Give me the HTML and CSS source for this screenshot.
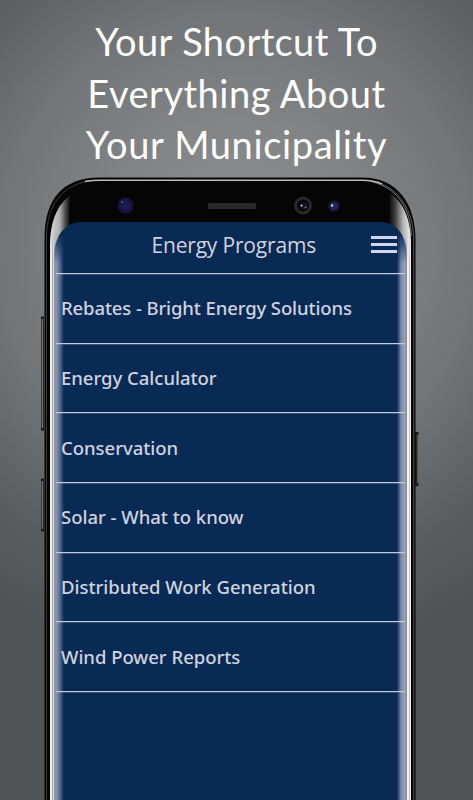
FILE: index.html
```
<!DOCTYPE html>
<html lang="en">

<head>
    <meta charset="UTF-8" />
    <meta name="viewport" content="width=device-width, initial-scale=1.0" />
    <title>Energy Programs</title>
    <link rel="stylesheet" href="styles.css">
</head>

<body>
    <h1 class="headline">
        <span class="line line-1">Your Shortcut To</span>
        <span class="line line-2">Everything About</span>
        <span class="line line-3">Your Municipality</span>
    </h1>
    <div class="phone">
        <!-- phone body -->
        <svg class="phone-art" width="385" height="630" viewBox="38 170 385 630">
            <defs>
                <linearGradient id="silver-l" x1="50" x2="74" y1="0" y2="0" gradientUnits="userSpaceOnUse">
                    <stop offset="0" stop-color="#dcdcdc" />
                    <stop offset="0.4" stop-color="#adadad" />
                    <stop offset="0.62" stop-color="#555" />
                    <stop offset="0.85" stop-color="#050505" />
                </linearGradient>
                <linearGradient id="silver-r" x1="411" x2="389" y1="0" y2="0" gradientUnits="userSpaceOnUse">
                    <stop offset="0" stop-color="#f0f0f0" />
                    <stop offset="0.35" stop-color="#b5b5b5" />
                    <stop offset="0.7" stop-color="#444" />
                    <stop offset="1" stop-color="#050505" />
                </linearGradient>
            </defs>
            <!-- side buttons -->
            <path d="M44 317H41.5V430H44M44 479H41.5V531H44" fill="#222" stroke="#111" />
            <path d="M42.2 319V428M42.2 481V529" stroke="#98999a" />
            <path d="M415 432.500H418V485.500H415" fill="#222" stroke="#111" />
            <path d="M418 435V483" stroke="#8d8e8f" />
            <path d="M44.500 810V238C44.500 200 62 177.500 100 177.500H362C397 177.500 415.500 203 415.500 240V810Z" fill="#050505" />
            <path d="M46.500 810V238C46.500 202 65 180.500 100 180.300" fill="none" stroke="#484848" stroke-width="0.8" />
            <path d="M85 181.500Q92 180.300 100 180.300H362Q374 180.300 382 184" fill="none" stroke="#bdbdbd" stroke-width="1.4" />
            <path d="M382 184C403 193 413.700 215 413.700 240V810" fill="none" stroke="#555" stroke-width="1" />
            <path d="M372 182C396 187 411 208 411.200 236" fill="none" stroke="#999" stroke-width="0.8" />
            <path d="M50 810V246C50 220 58 202 74 193V236L62 260V810Z" fill="url(#silver-l)" />
            <path d="M411 810V244C411 220 404 201 387 191V230L400 260V810Z" fill="url(#silver-r)" />
            <path d="M54.500 810V251C56 235 65 222 82 222H380C396 222 405 234 406.500 251V810Z" fill="#0a2a56" />
            <circle cx="125.500" cy="205.500" r="8" fill="#15153c" />
            <circle cx="125.500" cy="205" r="5" fill="#1b1b50" />
            <circle cx="122" cy="202" r="1" fill="#56568a" />
            <rect x="208" y="203" width="48" height="6" rx="1" fill="#292929" />
            <circle cx="303" cy="205.500" r="7.500" fill="#080808" stroke="#292929" stroke-width="3" />
            <circle cx="304" cy="206" r="3.500" fill="#141829" />
            <circle cx="301.500" cy="205.500" r="1" fill="#ddd" />
            <circle cx="305.500" cy="207.500" r="0.800" fill="#999" />
            <circle cx="334" cy="206" r="6" fill="#111330" />
            <circle cx="334" cy="206" r="4" fill="#20285a" />
            <circle cx="332" cy="205.500" r="1.200" fill="#ccd" />
        </svg>
        <div class="edge edge-left"></div>
        <div class="edge edge-right"></div>
        <div class="screen">
            <div class="topbar">
                <div class="title">Energy Programs</div>
                <div class="menu"><i></i><i></i><i></i></div>
            </div>
            <ul class="list">
                <li class="long">Rebates - Bright Energy Solutions</li>
                <li>Energy Calculator</li>
                <li>Conservation</li>
                <li>Solar - What to know</li>
                <li>Distributed Work Generation</li>
                <li>Wind Power Reports</li>
            </ul>
        </div>
    </div>
</body>

</html>
```
FILE: styles.css
```
* {
    box-sizing: border-box;
}

body {
    margin: 0;
    width: 473px;
    height: 800px;
    overflow: hidden;
    background: radial-gradient(ellipse 400px 400px at 236px 250px, #8e8f91 0%, #838587 30%, #727577 60%, #5b5e61 85%, #505457 105%);
    font-family: "Noto Sans", "Open Sans", sans-serif;
}

.headline {
    margin: 0;
    height: 170px;
    padding-top: 16px;
    display: flex;
    flex-direction: column;
    align-items: center;
    color: #fff;
    font: 400 38px/51.5px Lato, sans-serif;
}

.line {
    white-space: nowrap;
}

.line-1 {
    letter-spacing: 0.4px;
}

.line-2 {
    letter-spacing: 0.5px;
}

.line-3 {
    letter-spacing: 0.65px;
}

.phone {
    position: relative;
    width: 385px;
    height: 630px;
    margin-left: 38px;
    padding: 52px 18px 0;
}

.phone-art {
    position: absolute;
    left: 0;
    top: 0;
}

.screen {
    position: relative;
    color: #d0d3de;
}

.topbar {
    height: 52px;
    display: flex;
    align-items: center;
    justify-content: flex-end;
    padding: 0 8px 6px 0;
    border-bottom: 1px solid #c6c9dc;
    box-shadow: 0 1px rgba(190, 195, 220, 0.25);
}

.title {
    font: 400 21px/30px "Open Sans", sans-serif;
    letter-spacing: -0.18px;
    margin-right: 55px;
    white-space: nowrap;
}

.menu {
    display: flex;
    flex-direction: column;
    gap: 4px;
}

.menu i {
    width: 26px;
    height: 3px;
    background: #d2d6ea;
}

.list {
    margin: 0;
    padding: 0;
    list-style: none;
}

.list li {
    height: 69.650px;
    display: flex;
    align-items: center;
    padding: 0 0 1px 5px;
    border-bottom: 1px solid #c6c9dc;
    box-shadow: 0 1px rgba(190, 195, 220, 0.25);
    font-size: 18.500px;
    font-weight: 500;
    letter-spacing: -0.02px;
    white-space: nowrap;
}

.list .long {
    letter-spacing: -0.12px;
    padding-bottom: 2px;
}

/* curved glass on both sides */
.edge {
    position: absolute;
    top: 62px;
    bottom: 0;
    -webkit-mask-image: linear-gradient(transparent, #000 32px);
    mask-image: linear-gradient(transparent, #000 32px);
}

.edge-left {
    left: 12px;
    width: 14px;
    background: linear-gradient(90deg, #f0eded 0 2px, #aaa6a8 2px 3px, #dedbdd 3px 4px, #8f919c 4px 5px, #8c99b3 6px, rgba(130, 148, 180, 0.75) 9px, rgba(60, 85, 130, 0));
}

.edge-right {
    left: 359px;
    width: 14px;
    background: linear-gradient(270deg, #f4f2ef 0 1px, #c9c4bf 1px 2px, #f4f2ef 2px 4px, #8f8f98 4px 5px, #9aa3bb 6px, rgba(150, 162, 190, 0.8) 10px, rgba(60, 85, 130, 0));
}
```
